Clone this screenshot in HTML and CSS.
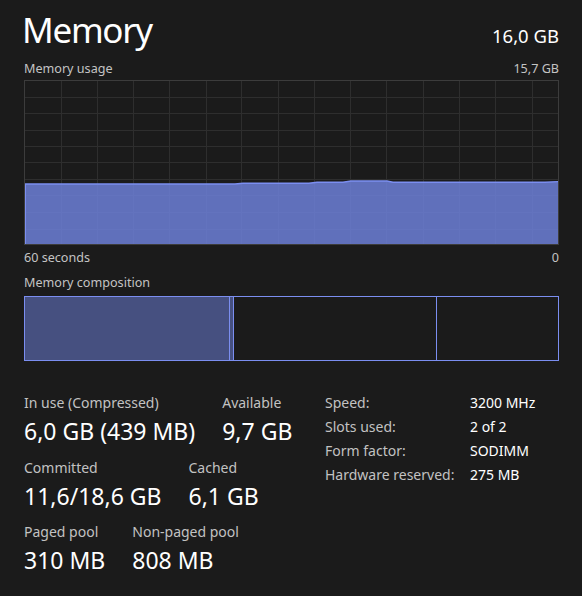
FILE: index.html
```html
<!DOCTYPE html>
<html lang="en">
<head>
<meta charset="utf-8">
<title>Memory</title>
<link rel="stylesheet" href="styles.css">
</head>
<body>
<main class="panel">
  <header class="head">
    <h1 class="title">Memory</h1>
    <div class="total">16,0 GB</div>
  </header>

  <div class="caption-row caption-top">
    <span>Memory usage</span>
    <span>15,7 GB</span>
  </div>

  <div class="graph">
    <svg class="graph-svg" viewBox="0 0 533 163" preserveAspectRatio="none" aria-hidden="true">
      <g class="grid">
        <line x1="36" y1="0" x2="36" y2="163"/>
        <line x1="72" y1="0" x2="72" y2="163"/>
        <line x1="108.5" y1="0" x2="108.5" y2="163"/>
        <line x1="144.5" y1="0" x2="144.5" y2="163"/>
        <line x1="181.5" y1="0" x2="181.5" y2="163"/>
        <line x1="216.5" y1="0" x2="216.5" y2="163"/>
        <line x1="253.5" y1="0" x2="253.5" y2="163"/>
        <line x1="289.5" y1="0" x2="289.5" y2="163"/>
        <line x1="325.5" y1="0" x2="325.5" y2="163"/>
        <line x1="361.5" y1="0" x2="361.5" y2="163"/>
        <line x1="398.5" y1="0" x2="398.5" y2="163"/>
        <line x1="434.5" y1="0" x2="434.5" y2="163"/>
        <line x1="470.5" y1="0" x2="470.5" y2="163"/>
        <line x1="507.5" y1="0" x2="507.5" y2="163"/>
        <line x1="0" y1="16.5" x2="533" y2="16.5"/>
        <line x1="0" y1="32.5" x2="533" y2="32.5"/>
        <line x1="0" y1="49.5" x2="533" y2="49.5"/>
        <line x1="0" y1="65.5" x2="533" y2="65.5"/>
        <line x1="0" y1="81.5" x2="533" y2="81.5"/>
        <line x1="0" y1="98.5" x2="533" y2="98.5"/>
        <line x1="0" y1="114.5" x2="533" y2="114.5"/>
        <line x1="0" y1="131.5" x2="533" y2="131.5"/>
        <line x1="0" y1="148.5" x2="533" y2="148.5"/>
      </g>
      <path class="area" d="M0 103 L210 103 L218 102.3 L284 102.3 L292 101.3 L318 101.3 L326 100 L362 100 L368 101.2 L520 101.2 L533 100.6 L533 163 L0 163 Z"/>
      <path class="area-line" d="M0 103 L210 103 L218 102.3 L284 102.3 L292 101.3 L318 101.3 L326 100 L362 100 L368 101.2 L520 101.2 L533 100.6"/>
      <line class="area-edge" x1="0.5" y1="103" x2="0.5" y2="163"/>
    </svg>
  </div>

  <div class="caption-row caption-axis">
    <span>60 seconds</span>
    <span>0</span>
  </div>

  <div class="caption-row caption-comp">
    <span>Memory composition</span>
  </div>

  <div class="composition">
    <div class="seg seg-inuse"></div>
    <div class="seg seg-modified"></div>
    <div class="seg seg-standby"></div>
    <div class="seg seg-free"></div>
  </div>

  <section class="stats">
    <div class="stats-main">
      <div class="stat-row">
        <div class="stat">
          <div class="stat-label">In use (Compressed)</div>
          <div class="stat-value">6,0 GB (439 MB)</div>
        </div>
        <div class="stat">
          <div class="stat-label">Available</div>
          <div class="stat-value">9,7 GB</div>
        </div>
      </div>
      <div class="stat-row">
        <div class="stat">
          <div class="stat-label">Committed</div>
          <div class="stat-value">11,6/18,6 GB</div>
        </div>
        <div class="stat">
          <div class="stat-label">Cached</div>
          <div class="stat-value">6,1 GB</div>
        </div>
      </div>
      <div class="stat-row">
        <div class="stat">
          <div class="stat-label">Paged pool</div>
          <div class="stat-value">310 MB</div>
        </div>
        <div class="stat">
          <div class="stat-label">Non-paged pool</div>
          <div class="stat-value">808 MB</div>
        </div>
      </div>
    </div>

    <dl class="props">
      <dt>Speed:</dt><dd>3200 MHz</dd>
      <dt>Slots used:</dt><dd>2 of 2</dd>
      <dt>Form factor:</dt><dd>SODIMM</dd>
      <dt>Hardware reserved:</dt><dd>275 MB</dd>
    </dl>
  </section>
</main>
</body>
</html>
```

FILE: styles.css
```css
html, body {
  margin: 0;
  padding: 0;
  background: #1b1b1b;
}

body {
  font-family: "Noto Sans", "Open Sans", sans-serif;
  color: #ffffff;
  width: 582px;
  height: 596px;
  overflow: hidden;
}

.panel {
  padding: 8px 23px 0 24px;
}

/* Heading: page title and installed memory */
.head {
  display: flex;
  justify-content: space-between;
  align-items: baseline;
  height: 44px;
}

.title {
  margin: 0 0 0 -2px;
  font-size: 35px;
  font-weight: 400;
  letter-spacing: -1.3px;
  line-height: 44px;
  color: #ffffff;
}

.total {
  font-size: 18.5px;
  line-height: 44px;
  color: #ffffff;
}

/* Small captions above and below the chart */
.caption-row {
  display: flex;
  justify-content: space-between;
  font-size: 12.6px;
  line-height: 16px;
  color: #c4c4c4;
}

.caption-top {
  margin-top: 9px;
}

.caption-axis {
  margin-top: 5px;
}

.caption-comp {
  margin-top: 9px;
}

/* Usage history chart */
.graph {
  margin-top: 3px;
  height: 163px;
  border: 1px solid #3c3c3c;
}

.graph-svg {
  display: block;
  width: 100%;
  height: 100%;
}

.grid line {
  stroke: #2e2e2e;
  stroke-width: 1;
  shape-rendering: crispEdges;
}

.area {
  fill: rgba(108, 127, 214, 0.86);
}

.area-line {
  fill: none;
  stroke: #7b8ef0;
  stroke-width: 1.4;
}

.area-edge {
  stroke: #7b8ef0;
  stroke-width: 1;
}

/* Composition bar */
.composition {
  margin-top: 5px;
  height: 63px;
  border: 1px solid #7b8ef0;
  display: flex;
}

.seg {
  height: 100%;
  border-right: 1px solid #7b8ef0;
}

.seg-inuse {
  width: 204px;
  background: #465080;
}

.seg-modified {
  width: 3px;
  background: #465080;
}

.seg-standby {
  width: 202px;
}

.seg-free {
  flex: 1;
  border-right: none;
}

/* Figures below the bar */
.stats {
  margin-top: 30px;
  display: flex;
  align-items: flex-start;
}

.stats-main {
  width: 301px;
  padding-top: 2px;
}

.stat-row {
  display: flex;
  gap: 27px;
  margin-bottom: 10.5px;
}

.stat-label {
  font-size: 14px;
  line-height: 20px;
  color: #c2c2c2;
}

.stat-value {
  margin-top: 2px;
  font-size: 23px;
  line-height: 32px;
  color: #ffffff;
}

.props {
  margin: 0;
  display: grid;
  grid-template-columns: 145px auto;
  align-content: start;
  font-size: 14px;
  line-height: 24px;
}

.props dt {
  color: #c2c2c2;
}

.props dd {
  margin: 0;
  color: #ffffff;
}
```
